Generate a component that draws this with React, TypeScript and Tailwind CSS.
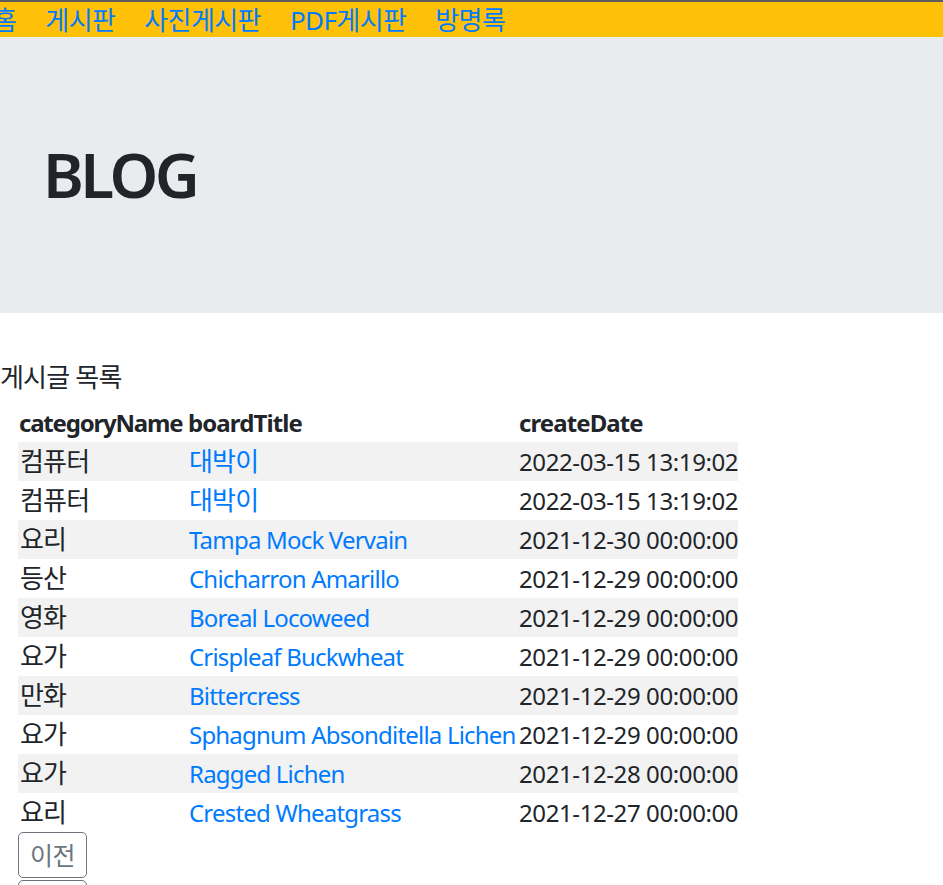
import React from 'react';

const rows = [
  { cat: '컴퓨터', title: '대박이', date: '2022-03-15 13:19:02' },
  { cat: '컴퓨터', title: '대박이', date: '2022-03-15 13:19:02' },
  { cat: '요리', title: 'Tampa Mock Vervain', date: '2021-12-30 00:00:00' },
  { cat: '등산', title: 'Chicharron Amarillo', date: '2021-12-29 00:00:00' },
  { cat: '영화', title: 'Boreal Locoweed', date: '2021-12-29 00:00:00' },
  { cat: '요가', title: 'Crispleaf Buckwheat', date: '2021-12-29 00:00:00' },
  { cat: '만화', title: 'Bittercress', date: '2021-12-29 00:00:00' },
  { cat: '요가', title: 'Sphagnum Absonditella Lichen', date: '2021-12-29 00:00:00' },
  { cat: '요가', title: 'Ragged Lichen', date: '2021-12-28 00:00:00' },
  { cat: '요리', title: 'Crested Wheatgrass', date: '2021-12-27 00:00:00' },
];

const menu = ['홈', '게시판', '사진게시판', 'PDF게시판', '방명록'];

// hangul in the shot renders a bit larger than latin text
const isHangul = (s: string) => /[가-힣]/.test(s);

export default function App() {
  return (
    <div className="min-h-screen overflow-hidden bg-white text-[24px] text-[#212529] font-['Noto_Sans','Noto_Sans_CJK_KR',sans-serif]">
      <div className="h-[2px] bg-[#5c5c5c]" />
      <nav className="h-[35px] bg-[#ffc107] flex items-center gap-[29px] ml-[-7px]">
        {menu.map((m) => (
          <a key={m} href="#" className="text-[#007bff] text-[26px] leading-none tracking-[-0.6px]">
            {m}
          </a>
        ))}
      </nav>
      <header className="h-[276px] bg-[#e9ecef] flex items-center pl-[43px]">
        <h1 className="text-[62px] font-semibold leading-none mt-[-3px] tracking-[-3.5px]">BLOG</h1>
      </header>

      <div className="pt-[46px]">
        <p className="leading-[36px] text-[26px] tracking-[-0.8px]">게시글 목록</p>
        <table className="ml-[18px] mt-[9px] border-collapse table-fixed w-[720px]">
          <thead>
            <tr className="h-[38px] text-left">
              <th className="w-[170px] font-bold p-0 pl-px tracking-[-1.2px]">categoryName</th>
              <th className="w-[330px] font-bold p-0 tracking-[-0.9px]">boardTitle</th>
              <th className="w-[220px] font-bold p-0 pl-px tracking-[-0.9px]">createDate</th>
            </tr>
          </thead>
          <tbody>
            {rows.map((r, i) => (
              <tr key={i} className={i % 2 === 0 ? 'h-[39px] bg-[#f2f2f2]' : 'h-[39px]'}>
                <td className="p-0 pl-[2px] whitespace-nowrap text-[26px] tracking-[-0.8px]">{r.cat}</td>
                <td
                  className={
                    isHangul(r.title)
                      ? 'p-0 pl-[1px] whitespace-nowrap text-[26px] tracking-[-0.8px]'
                      : 'p-0 pl-[1px] whitespace-nowrap tracking-[-0.8px]'
                  }
                >
                  <a href="#" className="text-[#007bff]">{r.title}</a>
                </td>
                <td className="p-0 pl-[1px] whitespace-nowrap tracking-[-0.4px]">{r.date}</td>
              </tr>
            ))}
          </tbody>
        </table>
        <div className="ml-[18px] flex flex-col gap-[2px]">
          <button className="w-[69px] h-[46px] border border-[#6c757d] rounded-[5px] text-[#6c757d] text-[25px] leading-none tracking-[-0.5px]">이전</button>
          <button className="w-[69px] h-[46px] border border-[#6c757d] rounded-[5px] text-[#6c757d] text-[25px] leading-none tracking-[-0.5px]">다음</button>
        </div>
      </div>
    </div>
  );
}
